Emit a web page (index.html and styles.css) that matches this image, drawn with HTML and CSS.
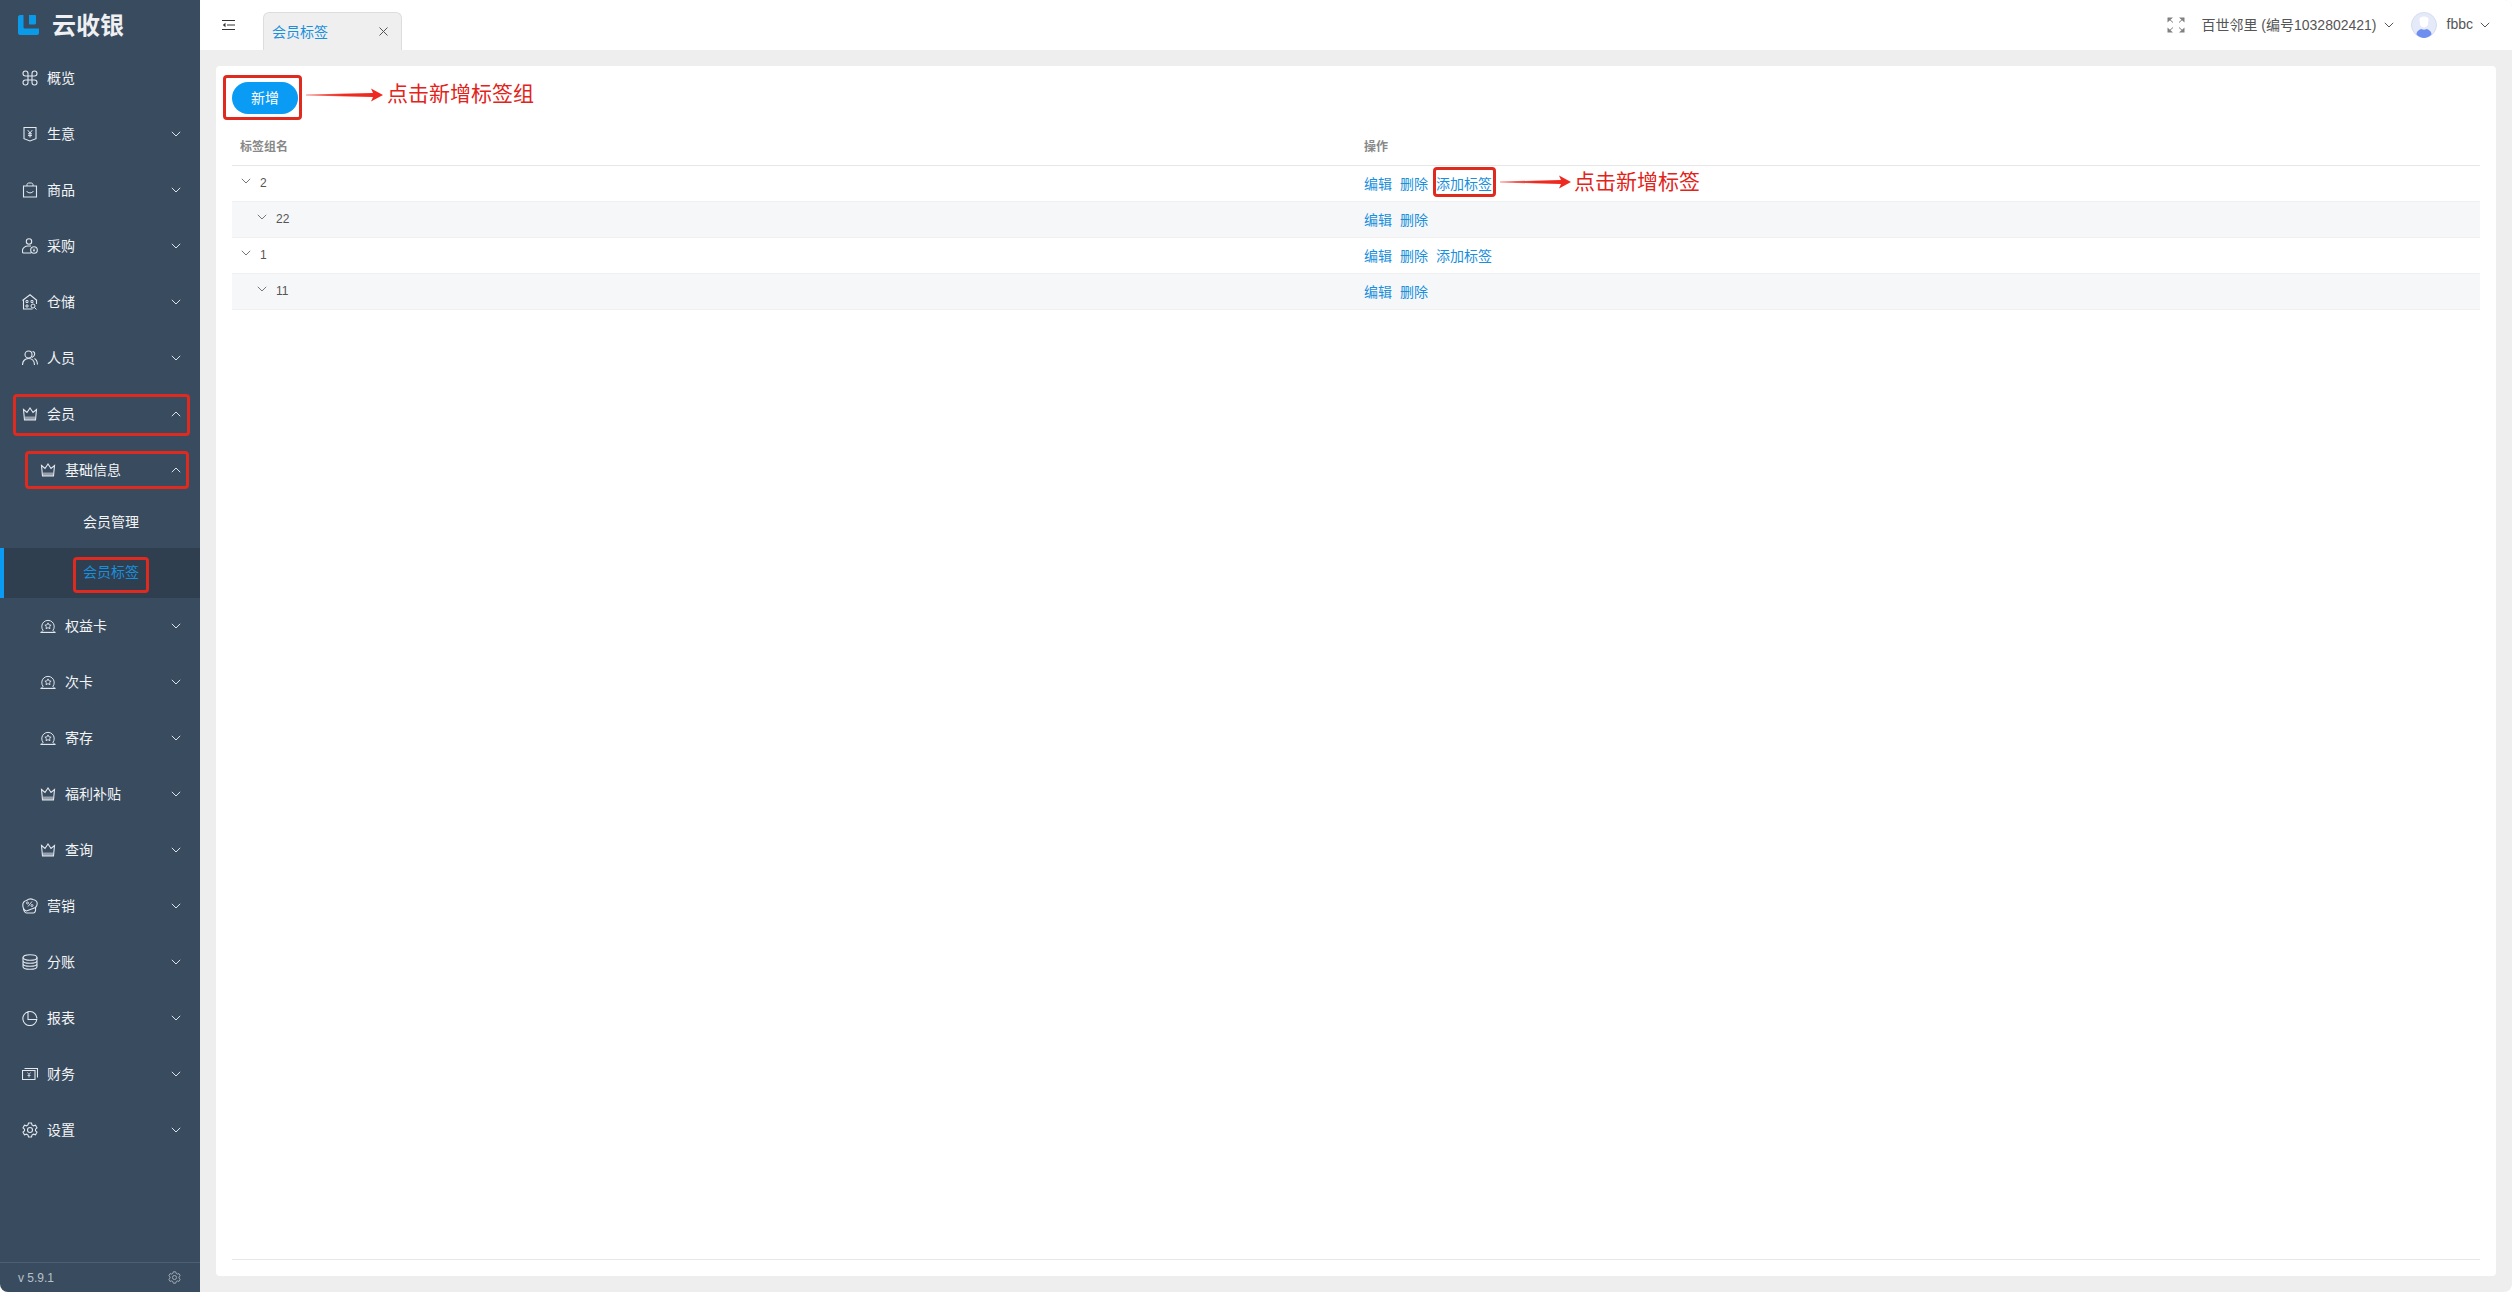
FILE: index.html
```html
<!DOCTYPE html>
<html lang="zh-CN">
<head>
    <meta charset="UTF-8">
    <title>会员标签</title>
    <link rel="stylesheet" href="styles.css">
</head>
<body>
    <svg class="defs" width="0" height="0">
        <defs>
            <linearGradient id="tail"><stop offset="0" stop-color="#f58a80"/><stop offset=".5" stop-color="#ee2a20"/></linearGradient>
        </defs>
        <symbol id="i-crown" viewBox="0 0 16 14"><path d="M1.500 2.500l3.500 3 3-4.500 3 4.500 3.500-3-1 10.500H2.500z" fill="none" stroke="currentColor" stroke-width="1.100"/><path d="M2.800 9.500h10.400v3.500H2.800z" fill="currentColor" opacity=".55"/></symbol>
        <symbol id="i-card" viewBox="0 0 18 16"><path d="M3.500 13a7 7 0 1 1 11 0" fill="none" stroke="currentColor" stroke-width="1.100"/><path d="M.5 15.200h17" stroke="currentColor" stroke-width="1.300"/><path d="M3.500 12.800l-2 2.300M14.500 12.800l2 2.300" stroke="currentColor"/><path d="M9 4.500l1.200 2.300 2.300.3-1.700 1.600.4 2.300-2.200-1.100-2.200 1.100.4-2.300-1.700-1.600 2.300-.3z" fill="none" stroke="currentColor"/></symbol>
        <symbol id="i-chev" viewBox="0 0 10 6"><path d="M.8.800L5 5 9.200.800" fill="none" stroke="currentColor"/></symbol>
        <symbol id="i-gear" viewBox="0 0 16 16"><path d="M6.500 1h3l.5 2 1.500.8 2-.6 1.500 2.600-1.500 1.400v1.600l1.500 1.400-1.500 2.600-2-.6-1.500.8-.5 2h-3l-.5-2-1.500-.8-2 .6L1 10.200l1.500-1.400V7.200L1 5.800l1.500-2.600 2 .6L6 3z" fill="none" stroke="currentColor" stroke-width="1.100"/><circle cx="8" cy="8" r="2.500" fill="none" stroke="currentColor" stroke-width="1.100"/></symbol>
    </svg>

    <div class="app">
        <aside class="side">
            <div class="logo">
                <svg class="logo-mark" width="21" height="20" viewBox="0 0 21 20"><path d="M2 0h3.500v12c0 1 .5 1.500 1.500 1.500h14V18c0 1-.8 2-2 2H2c-1 0-2-1-2-2V2c0-1 1-2 2-2zM11 0h6a1 1 0 0 1 1 1v7c0 1-1 1.500-2 1.500h-4c-.6 0-1-.4-1-1z" fill="#0a9be8"/></svg>
                <span class="logo-text">云收银</span>
            </div>
            <ul class="menu">
                <li class="item">
                    <svg class="ico" viewBox="0 0 16 16"><path d="M6 6V3.500A2.500 2.500 0 1 0 3.500 6zM10 6V3.500A2.500 2.500 0 1 1 12.500 6zM6 10v2.500A2.500 2.500 0 1 1 3.500 10zM10 10v2.500a2.500 2.500 0 1 0 2.500-2.500zM6 6h4v4H6z" fill="none" stroke="currentColor" stroke-width="1.100"/></svg>
                    <span class="label">概览</span>
                </li>
                <li class="item">
                    <svg class="ico" viewBox="0 0 16 16"><path d="M2 1.500h12v11.200L8 15 2 12.700z" fill="none" stroke="currentColor" stroke-width="1.100"/><path d="M5.800 4.200L8 7l2.200-2.800M8 7v4.500M6 7.800h4M6 9.600h4" fill="none" stroke="currentColor"/></svg>
                    <span class="label">生意</span>
                    <svg class="chev"><use href="#i-chev"/></svg>
                </li>
                <li class="item">
                    <svg class="ico" viewBox="0 0 16 16"><path d="M1.500 4h13v11h-13z" fill="none" stroke="currentColor" stroke-width="1.100"/><path d="M5 4V2.500C5 1.500 6 1 7 1h2c1 0 2 .5 2 1.500V4M4.500 9c1.500 2.500 5.500 2.500 7 0" fill="none" stroke="currentColor"/></svg>
                    <span class="label">商品</span>
                    <svg class="chev"><use href="#i-chev"/></svg>
                </li>
                <li class="item">
                    <svg class="ico" viewBox="0 0 16 16"><circle cx="7" cy="3.500" r="2.700" fill="none" stroke="currentColor" stroke-width="1.100"/><path d="M9 15H1.500c-.8 0-1-.5-1-1v-1.500C.5 10 3 8 6 8h3" fill="none" stroke="currentColor" stroke-width="1.100"/><circle cx="12" cy="12" r="3.300" fill="none" stroke="currentColor" stroke-width="1.100"/><path d="M11 10.500l1 1.300 1-1.300M12 11.800v2M11 12.500h2" stroke="currentColor" stroke-width=".7" fill="none"/></svg>
                    <span class="label">采购</span>
                    <svg class="chev"><use href="#i-chev"/></svg>
                </li>
                <li class="item">
                    <svg class="ico" viewBox="0 0 16 16"><path d="M.5 6.500L8 .8l7 5.700M1.500 6v9h9M14.500 6v4" fill="none" stroke="currentColor" stroke-width="1.100"/><path d="M4 6.500h2v2H4zM9 6.500h2v2H9zM4 11h2v2H4z" fill="none" stroke="currentColor" stroke-width=".9"/><circle cx="11" cy="12" r="2" fill="none" stroke="currentColor"/><path d="M12.500 13.500l2 2" stroke="currentColor"/></svg>
                    <span class="label">仓储</span>
                    <svg class="chev"><use href="#i-chev"/></svg>
                </li>
                <li class="item">
                    <svg class="ico" viewBox="0 0 16 16"><circle cx="6.500" cy="4.500" r="3.500" fill="none" stroke="currentColor" stroke-width="1.100"/><path d="M.5 15c0-4 2.500-6.500 6-6.500s6 2.500 6 6.500M10.500 1.500c2.500 0 3.500 4-.5 6M12.500 8.500c1.800 1 2.800 3.500 3 6" fill="none" stroke="currentColor" stroke-width="1.100"/></svg>
                    <span class="label">人员</span>
                    <svg class="chev"><use href="#i-chev"/></svg>
                </li>
                <li class="item">
                    <svg class="ico"><use href="#i-crown"/></svg>
                    <span class="label">会员</span>
                    <svg class="chev up"><use href="#i-chev"/></svg>
                </li>
                <li class="item sub">
                    <svg class="ico"><use href="#i-crown"/></svg>
                    <span class="label">基础信息</span>
                    <svg class="chev up"><use href="#i-chev"/></svg>
                </li>
                <li class="leaf">会员管理</li>
                <li class="leaf active">会员标签</li>
                <li class="item sub">
                    <svg class="ico"><use href="#i-card"/></svg>
                    <span class="label">权益卡</span>
                    <svg class="chev"><use href="#i-chev"/></svg>
                </li>
                <li class="item sub">
                    <svg class="ico"><use href="#i-card"/></svg>
                    <span class="label">次卡</span>
                    <svg class="chev"><use href="#i-chev"/></svg>
                </li>
                <li class="item sub">
                    <svg class="ico"><use href="#i-card"/></svg>
                    <span class="label">寄存</span>
                    <svg class="chev"><use href="#i-chev"/></svg>
                </li>
                <li class="item sub">
                    <svg class="ico"><use href="#i-crown"/></svg>
                    <span class="label">福利补贴</span>
                    <svg class="chev"><use href="#i-chev"/></svg>
                </li>
                <li class="item sub">
                    <svg class="ico"><use href="#i-crown"/></svg>
                    <span class="label">查询</span>
                    <svg class="chev"><use href="#i-chev"/></svg>
                </li>
                <li class="item">
                    <svg class="ico" viewBox="0 0 16 16"><path d="M.8 7c0-3 2-4 3.700-4.500C6.500 1 9 .5 11 1.500c2 .5 4.200 1.500 4.200 4 0 2-.7 3-1.700 4l-9 3.500C2.500 12.500.8 10 .8 7z" fill="none" stroke="currentColor" stroke-width="1.100"/><path d="M1.500 10c0 2.500 1.500 5 3 5h7c1.500 0 2.500-2 2-5.500" fill="none" stroke="currentColor" stroke-width="1.100"/><path d="M6 8.500l4-5" stroke="currentColor" stroke-width=".9"/><circle cx="5.500" cy="5" r="1" fill="none" stroke="currentColor" stroke-width=".9"/><circle cx="10" cy="7.500" r="1" fill="none" stroke="currentColor" stroke-width=".9"/></svg>
                    <span class="label">营销</span>
                    <svg class="chev"><use href="#i-chev"/></svg>
                </li>
                <li class="item">
                    <svg class="ico" viewBox="0 0 16 16"><ellipse cx="8" cy="3.500" rx="7" ry="2.800" fill="none" stroke="currentColor" stroke-width="1.100"/><path d="M1 3.500v9c0 1.500 3 2.800 7 2.800s7-1.300 7-2.800v-9M1 6.500c0 1.500 3 2.800 7 2.800s7-1.300 7-2.800M1 9.500c0 1.500 3 2.800 7 2.800s7-1.300 7-2.800" fill="none" stroke="currentColor" stroke-width="1.100"/></svg>
                    <span class="label">分账</span>
                    <svg class="chev"><use href="#i-chev"/></svg>
                </li>
                <li class="item">
                    <svg class="ico" viewBox="0 0 16 16"><path d="M6 1.800A7 7 0 1 0 14.800 9.500H6z" fill="none" stroke="currentColor" stroke-width="1.100"/><path d="M6 1.800Q7 1.500 8 1.500A6.800 6.800 0 0 1 14.800 8.500" fill="none" stroke="currentColor" stroke-width="1.100"/></svg>
                    <span class="label">报表</span>
                    <svg class="chev"><use href="#i-chev"/></svg>
                </li>
                <li class="item">
                    <svg class="ico" viewBox="0 0 16 16"><path d="M.5 4.500h12.500v9H.5z" fill="none" stroke="currentColor" stroke-width="1.100"/><path d="M2.500 2.500h13v9" fill="none" stroke="currentColor" stroke-width="1.100"/><path d="M5.500 6.500L7 8.500l1.500-2M7 8.500v3M5.500 9.500h3" stroke="currentColor" stroke-width=".8" fill="none"/></svg>
                    <span class="label">财务</span>
                    <svg class="chev"><use href="#i-chev"/></svg>
                </li>
                <li class="item">
                    <svg class="ico"><use href="#i-gear"/></svg>
                    <span class="label">设置</span>
                    <svg class="chev"><use href="#i-chev"/></svg>
                </li>
            </ul>
            <div class="side-foot">
                <span class="version">v 5.9.1</span>
                <svg class="foot-gear"><use href="#i-gear"/></svg>
            </div>
        </aside>

        <div class="main">
            <header class="top">
                <svg class="fold" width="14" height="10" viewBox="0 0 14 10"><path d="M0 .5h13M5 5h8M0 9.500h13" stroke="#333" fill="none"/><path d="M3.500 2.700L.8 5l2.700 2.300z" fill="#333"/></svg>
                <div class="tab">
                    <span class="tab-name">会员标签</span>
                    <svg class="tab-close" width="9" height="9" viewBox="0 0 9 9"><path d="M.5.500l8 8M8.500.500l-8 8" stroke="#555" fill="none"/></svg>
                </div>
                <div class="top-right">
                    <svg class="full" width="18" height="16" viewBox="0 0 18 16"><path d="M1 1l5 4.500M17 1l-5 4.500M1 15l5-4.500M17 15l-5-4.500" stroke="#808080" fill="none"/><path d="M.5.500h5.500L.5 5.500zM17.500.500H12l5.500 5zM.5 15.500H6l-5.500-5zM17.500 15.500H12l5.500-5z" fill="#808080"/></svg>
                    <span class="shop">百世邻里 (编号1032802421)</span>
                    <svg class="top-chev"><use href="#i-chev"/></svg>
                    <svg class="avatar" width="26" height="26" viewBox="0 0 26 26"><circle cx="13" cy="13" r="12.500" fill="#e4eaf8" stroke="#d5dcf0"/><path d="M8.500 7.500c0-2 2-3 4.500-3s4.500 1 4.500 3l-.5 5c-.5 2-2.500 3-4 3s-3.500-1-4-3z" fill="#fff"/><path d="M5.500 22.500c0-3.500 3-5 5-5.500 1.500 1 3.500 1 5 0 2 .5 5 2 5 5.500-2 2-5 3.500-7.500 3.500s-5.500-1.500-7.500-3.500z" fill="#6f8ff0"/></svg>
                    <span class="user">fbbc</span>
                    <svg class="top-chev"><use href="#i-chev"/></svg>
                </div>
            </header>

            <main class="content">
                <section class="card">
                    <button class="btn">新增</button>
                    <div class="table-wrap">
                        <table class="tree">
                            <thead>
                                <tr><th>标签组名</th><th>操作</th></tr>
                            </thead>
                            <tbody>
                                <tr>
                                    <td><svg class="row-chev"><use href="#i-chev"/></svg>2</td>
                                    <td class="ops"><a>编辑</a><a>删除</a><a>添加标签</a></td>
                                </tr>
                                <tr class="child">
                                    <td><svg class="row-chev"><use href="#i-chev"/></svg>22</td>
                                    <td class="ops"><a>编辑</a><a>删除</a></td>
                                </tr>
                                <tr>
                                    <td><svg class="row-chev"><use href="#i-chev"/></svg>1</td>
                                    <td class="ops"><a>编辑</a><a>删除</a><a>添加标签</a></td>
                                </tr>
                                <tr class="child">
                                    <td><svg class="row-chev"><use href="#i-chev"/></svg>11</td>
                                    <td class="ops"><a>编辑</a><a>删除</a></td>
                                </tr>
                            </tbody>
                        </table>
                    </div>
                </section>
            </main>
        </div>
    </div>

    <!-- red marks drawn over the screenshot -->
    <div class="mark mark-member"></div>
    <div class="mark mark-base"></div>
    <div class="mark mark-tag"></div>
    <div class="mark mark-add"></div>
    <div class="mark mark-addtag"></div>

    <svg class="arrow arrow-add" width="78" height="16" viewBox="0 0 78 16"><path d="M0 7.500L67 6 65 1.500 77 8 65 14.500 67 10 0 8.500z" fill="url(#tail)"/></svg>
    <span class="note note-add">点击新增标签组</span>
    <svg class="arrow arrow-tag" width="72" height="16" viewBox="0 0 72 16"><path d="M0 7.500L61 6 59 1.500 71 8 59 14.500 61 10 0 8.500z" fill="url(#tail)"/></svg>
    <span class="note note-tag">点击新增标签</span>
</body>
</html>
```

FILE: styles.css
```css
*{
    box-sizing: border-box;
}
html, body{
    height: 100%;
}
body{
    margin: 0;
    background: #fff;
    color: #555;
    font-family: "Liberation Sans", "Noto Sans CJK SC", sans-serif;
    font-size: 14px;
    overflow: hidden;
}
ul{
    list-style: none;
    margin: 0;
    padding: 0;
}
.defs{
    position: absolute;
}
.app{
    display: flex;
    height: 100%;
    border-radius: 0 8px 8px 8px;
    overflow: hidden;
}

/* sidebar */
.side{
    width: 200px;
    flex: none;
    display: flex;
    flex-direction: column;
    background: #394b5f;
    color: #e6eaee;
}
.logo{
    height: 50px;
    display: flex;
    align-items: center;
    padding-left: 18px;
    flex: none;
}
.logo-mark{
    margin-right: 13px;
}
.logo-text{
    color: #eef0f2;
    font-size: 24px;
    font-weight: 700;
    line-height: 50px;
    margin-top: 1px;
}
.menu{
    flex: 1;
}
.item{
    height: 56px;
    display: flex;
    align-items: center;
    padding-left: 22px;
    padding-right: 19px;
}
.item.sub{
    padding-left: 40px;
}
.ico{
    width: 16px;
    height: 16px;
    flex: none;
    margin-right: 9px;
    color: #e4e8ed;
}
.label{
    flex: 1;
    padding-bottom: 2px;
    color: #f2f4f6;
}
.chev{
    width: 10px;
    height: 6px;
    color: #dde2e8;
}
.chev.up{
    transform: rotate(180deg);
}
.leaf{
    height: 50px;
    line-height: 48px;
    padding-left: 83px;
    color: #f2f4f6;
}
.leaf.active{
    background: #2f3f50;
    border-left: 4px solid #0a9bf5;
    padding-left: 79px;
    color: #1a8fdc;
}
.side-foot{
    height: 30px;
    flex: none;
    display: flex;
    align-items: center;
    justify-content: space-between;
    padding: 0 18px;
    border-top: 1px solid #4d5f73;
    color: #b8c0c8;
    font-size: 12px;
}
.foot-gear{
    width: 13px;
    height: 13px;
    color: #aab3bc;
    margin-right: 1px;
}

/* top bar */
.main{
    flex: 1;
    min-width: 0;
    display: flex;
    flex-direction: column;
    background: #eee;
}
.top{
    height: 50px;
    flex: none;
    display: flex;
    align-items: flex-end;
    background: #fff;
    padding-left: 22px;
}
.fold{
    align-self: flex-start;
    margin-top: 20px;
    margin-right: 27px;
}
.tab{
    width: 139px;
    height: 38px;
    display: flex;
    align-items: center;
    justify-content: space-between;
    padding: 0 13px 0 8px;
    background: #efefef;
    border: 1px solid #ddd;
    border-bottom: 0;
    border-radius: 6px 6px 0 0;
}
.tab-name{
    color: #1a8fdc;
    padding-bottom: 2px;
}
.top-right{
    margin-left: auto;
    align-self: stretch;
    display: flex;
    align-items: center;
    padding-right: 22px;
}
.full{
    margin-right: 16px;
}
.shop, .user{
    color: #555;
    padding-bottom: 2px;
}
.top-chev{
    width: 10px;
    height: 6px;
    margin-left: 7px;
    color: #555;
}
.avatar{
    margin: 0 10px 0 17px;
}

/* content */
.content{
    flex: 1;
    min-height: 0;
    padding: 16px;
    display: flex;
}
.card{
    flex: 1;
    display: flex;
    flex-direction: column;
    align-items: flex-start;
    padding: 16px;
    background: #fff;
    border-radius: 4px;
}
.btn{
    width: 66px;
    height: 32px;
    flex: none;
    margin-bottom: 12px;
    padding: 0 0 2px;
    border: 0;
    border-radius: 16px;
    background: #0a9bf5;
    color: #fff;
    font: inherit;
}
.table-wrap{
    flex: 1;
    width: 100%;
    border-bottom: 1px solid #e8e8e8;
}
.tree{
    width: 100%;
    table-layout: fixed;
    border-collapse: separate;
    border-spacing: 0;
}
.tree th{
    height: 40px;
    padding: 0 8px;
    text-align: left;
    color: #888;
    font-size: 12px;
    font-weight: 700;
    border-bottom: 1px solid #e6e6e6;
}
.tree td{
    height: 36px;
    padding: 0 8px 2px;
    font-size: 12px;
    color: #555;
    border-bottom: 1px solid #f0f0f0;
}
.tree .child td{
    background: #f5f7f9;
}
.row-chev{
    width: 10px;
    height: 6px;
    margin: 0 9px 3px 1px;
    color: #777;
}
.child .row-chev{
    margin-left: 17px;
}
.tree .ops{
    font-size: 14px;
}
.ops a{
    color: #1a8fdc;
    margin-right: 8px;
}

/* red marks */
.mark{
    position: absolute;
    border: 3px solid #df2a20;
    border-radius: 4px;
}
.mark-member{
    left: 13px;
    top: 394px;
    width: 177px;
    height: 42px;
}
.mark-base{
    left: 25px;
    top: 451px;
    width: 164px;
    height: 38px;
}
.mark-tag{
    left: 73px;
    top: 557px;
    width: 76px;
    height: 36px;
}
.mark-add{
    left: 223px;
    top: 75px;
    width: 79px;
    height: 45px;
}
.mark-addtag{
    left: 1433px;
    top: 167px;
    width: 63px;
    height: 30px;
}
.arrow{
    position: absolute;
}
.arrow-add{
    left: 306px;
    top: 87px;
}
.arrow-tag{
    left: 1500px;
    top: 174px;
}
.note{
    position: absolute;
    color: #e2231a;
    font-size: 21px;
    line-height: 28px;
    white-space: nowrap;
}
.note-add{
    left: 387px;
    top: 80px;
}
.note-tag{
    left: 1574px;
    top: 168px;
}
```
